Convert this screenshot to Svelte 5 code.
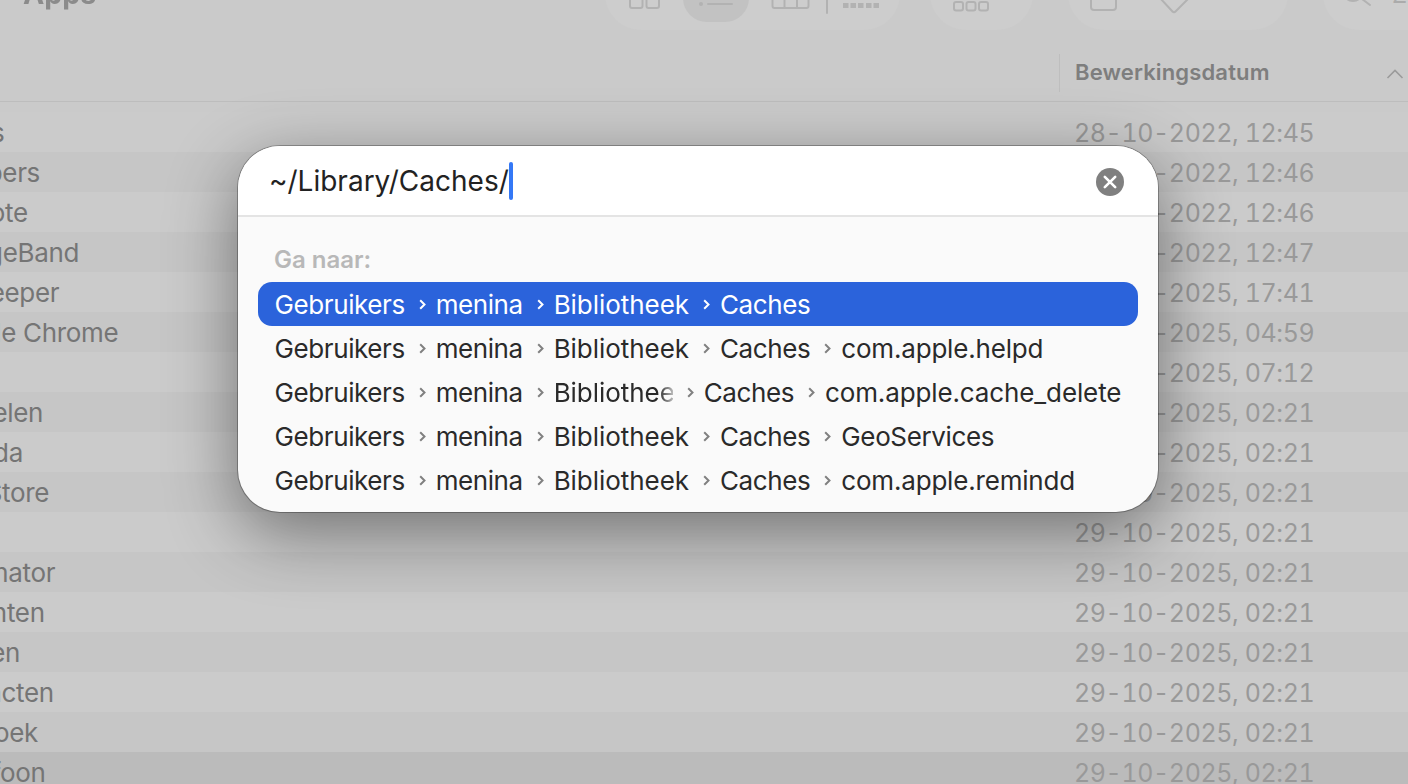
<script>
  const files = [
    ["Pages", "28-10-2022, 12:45"],
    ["Numbers", "28-10-2022, 12:46"],
    ["Keynote", "28-10-2022, 12:46"],
    ["GarageBand", "28-10-2022, 12:47"],
    ["Beekeeper", "20-10-2025, 17:41"],
    ["Google Chrome", "22-10-2025, 04:59"],
    ["Mail", "24-10-2025, 07:12"],
    ["Aandelen", "29-10-2025, 02:21"],
    ["Agenda", "29-10-2025, 02:21"],
    ["App Store", "29-10-2025, 02:21"],
    ["Atlas", "29-10-2025, 02:21"],
    ["Automator", "29-10-2025, 02:21"],
    ["Berichten", "29-10-2025, 02:21"],
    ["Boeken", "29-10-2025, 02:21"],
    ["Contacten", "29-10-2025, 02:21"],
    ["Dagboek", "29-10-2025, 02:21"],
    ["Dictafoon", "29-10-2025, 02:21"]
  ];

  const base = ["Gebruikers", "menina", "Bibliotheek", "Caches"];
  const results = [
    { path: base, selected: true },
    { path: [...base, "com.apple.helpd"] },
    { path: [...base, "com.apple.cache_delete"], faded: 2 },
    { path: [...base, "GeoServices"] },
    { path: [...base, "com.apple.remindd"] }
  ];

  // tracking per word, Inter runs a bit wider than the original font
  const tracking = {
    Gebruikers: -0.4,
    menina: -0.45,
    Bibliotheek: -0.05,
    Caches: -0.4,
    GeoServices: -0.36,
    "com.apple.cache_delete": -0.12
  };
  const track = (word) => (tracking[word] ?? -0.19) + "px";
</script>

<div class="finder">
  <div class="toolbar">
    <div class="title">Apps</div>

    <div class="pill views">
      <svg viewBox="605 0 295 30">
        <rect class="sel" x="683" y="-30" width="66" height="52" rx="24" />
        <rect class="ic" x="630" y="-8" width="12.5" height="16" rx="2" />
        <rect class="ic" x="646.5" y="-8" width="12.5" height="16" rx="2" />
        <circle class="dot" cx="701" cy="4" r="2" />
        <path class="ic" d="M708 4h24" />
        <path class="ic" d="M772.5 -8v14a2 2 0 0 0 2 2h32a2 2 0 0 0 2-2v-14M784.5 -8v16M797 -8v16" />
        <path class="ic" d="M827 0v13" stroke-width="1" />
        <rect class="dot" x="843" y="3" width="5.5" height="5" />
        <rect class="dot" x="850.5" y="3" width="5.5" height="5" />
        <rect class="dot" x="858" y="3" width="5.5" height="5" />
        <rect class="dot" x="866" y="3" width="5.5" height="5" />
        <rect class="dot" x="873.5" y="3" width="5.5" height="5" />
      </svg>
    </div>

    <div class="pill group">
      <svg viewBox="930 0 103 30">
        <rect class="ic" x="954" y="2" width="9" height="8.5" rx="2" />
        <rect class="ic" x="966.5" y="2" width="9" height="8.5" rx="2" />
        <rect class="ic" x="979" y="2" width="9" height="8.5" rx="2" />
      </svg>
    </div>

    <div class="pill actions">
      <svg viewBox="1068 0 220 30">
        <path class="ic" d="M1091 -6v13a3 3 0 0 0 3 3h19a3 3 0 0 0 3-3v-13" />
        <path class="ic" d="M1160 -2l12.5 13.5a2 2 0 0 0 3 0l13.5-13.5" />
      </svg>
    </div>

    <div class="pill search">
      <svg class="glass" viewBox="0 0 24 12">
        <circle class="ic" cx="4" cy="-9" r="10" />
        <path class="ic" d="M13 -1l8 6" stroke-width="3" />
      </svg>
      <span class="query">Zoek</span>
    </div>
  </div>

  <div class="head">
    <div class="col">Bewerkingsdatum</div>
    <svg class="sort" viewBox="0 0 18 10">
      <path d="M1.5 9l7.5-7.5 7.5 7.5" />
    </svg>
  </div>

  <div class="rows">
    {#each files as f, i}
      <div class="row" class:odd={i % 2 === 1} class:current={i === files.length - 1}>
        <span class="name">{f[0]}</span>
        <span class="date">{f[1]}</span>
      </div>
    {/each}
  </div>

  <!-- Ga naar map -->
  <div class="dialog">
    <div class="field">
      <span class="typed">~/Library/Caches/</span>
      <span class="caret"></span>
      <svg class="clear" viewBox="0 0 28 28">
        <circle cx="14" cy="14" r="14" fill="#808080" />
        <path d="M8.8 8.8l10.4 10.4M19.2 8.8l-10.4 10.4" stroke="#fff" stroke-width="2.6" stroke-linecap="round" />
      </svg>
    </div>

    <div class="body">
      <div class="label">Ga naar:</div>
      {#each results as r}
        <div class="result" class:selected={r.selected}>
          {#each r.path as part, j}
            {#if j > 0}
              <svg class="chev" viewBox="0 0 7 11">
                <path d="M1.2 1.2l4.3 4.3-4.3 4.3" />
              </svg>
            {/if}
            <span class="part" class:cut={r.faded === j} style:letter-spacing={track(part)}>{part}</span>
          {/each}
        </div>
      {/each}
    </div>
  </div>
</div>

<style>
  :global(body) {
    margin: 0;
    overflow: hidden;
    background: #cacaca;
  }

  .finder {
    position: relative;
    width: 1408px;
    height: 784px;
    overflow: hidden;
    background: #cacaca;
    font-family: Inter, "Liberation Sans", sans-serif;
  }

  /* toolbar is scrolled off the top, only the bottom of it shows */
  .toolbar {
    display: flex;
    align-items: flex-end;
    height: 30px;
    margin-bottom: 24px;
  }

  .title {
    width: 605px;
    padding-left: 23px;
    height: 40px;
    line-height: 40px;
    margin-bottom: 16px;
    font-size: 28.5px;
    font-weight: 700;
    color: #8b8b8b;
    flex-shrink: 0;
    box-sizing: border-box;
    filter: blur(0.4px);
  }

  .pill {
    flex-shrink: 0;
    height: 60px;
    background: #cdcdcd;
    border-radius: 0 0 36px 36px;
    overflow: hidden;
  }

  .pill svg {
    display: block;
    position: relative;
    top: 30px;
    height: 30px;
    width: 100%;
  }

  .views {
    width: 295px;
    margin-right: 30px;
  }

  .group {
    width: 103px;
    margin-right: 35px;
  }

  .actions {
    width: 220px;
    margin-right: 35px;
  }

  .search {
    width: 85px;
    display: flex;
    align-items: flex-end;
    border-radius: 0 0 0 36px;
  }

  .pill svg.glass {
    position: static;
    flex-shrink: 0;
    width: 24px;
    height: 12px;
    margin-left: 26px;
    margin-bottom: 18px;
    overflow: visible;
  }

  .query {
    margin-left: 19px;
    margin-bottom: 22px;
    font-size: 24px;
    line-height: 26px;
    color: #ababab;
    white-space: nowrap;
  }

  .sel {
    fill: #c2c2c2;
  }

  .ic {
    fill: none;
    stroke: #b2b2b2;
    stroke-width: 2;
    stroke-linecap: round;
  }

  .dot {
    fill: #b2b2b2;
  }

  .head {
    display: flex;
    align-items: center;
    height: 47px;
    border-bottom: 1px solid #bdbdbd;
    padding-left: 1059px;
  }

  .col {
    height: 38px;
    line-height: 37px;
    margin-top: -9px;
    width: 300px;
    padding-left: 15px;
    border-left: 1px solid #bebebe;
    font-size: 22px;
    font-weight: 600;
    letter-spacing: 0.15px;
    color: #7e7e7e;
    flex-shrink: 0;
  }

  .sort {
    width: 18px;
    height: 10px;
    margin-left: 11px;
    margin-top: -8px;
    fill: none;
    stroke: #9b9b9b;
    stroke-width: 1.6;
    flex-shrink: 0;
  }

  .rows {
    padding-top: 10px;
  }

  .row {
    display: flex;
    align-items: center;
    height: 40px;
    background: #cbcbcb;
    font-size: 26px;
    white-space: nowrap;
  }

  .row.odd {
    background: #c6c6c6;
  }

  .row.current {
    background: #bbbbbb;
  }

  .name {
    width: 1144px;
    margin-left: -70px;
    letter-spacing: -0.33px;
    color: #757575;
    flex-shrink: 0;
  }

  .date {
    margin-top: 2px;
    font-size: 25px;
    font-variant-numeric: tabular-nums;
    letter-spacing: -0.4px;
    color: #999999;
  }

  .dialog {
    position: absolute;
    left: 238px;
    top: 146px;
    width: 920px;
    height: 366px;
    border-radius: 42px;
    overflow: hidden;
    background: #fafafa;
    box-shadow: 0 0 0 1px rgba(0, 0, 0, 0.28), 0 20px 70px rgba(0, 0, 0, 0.45);
  }

  .field {
    display: flex;
    align-items: center;
    height: 69px;
    padding-left: 31px;
    padding-right: 34px;
    background: #ffffff;
    border-bottom: 2px solid #e4e4e4;
    font-size: 28px;
    color: #222222;
  }

  .caret {
    width: 4px;
    height: 38px;
    border-radius: 2px;
    background: #3478f6;
  }

  .clear {
    width: 28px;
    height: 28px;
    margin-left: auto;
    margin-top: 3px;
  }

  .body {
    padding: 30px 20px 0;
  }

  .label {
    height: 26px;
    line-height: 26px;
    margin-bottom: 9px;
    padding-left: 16px;
    font-size: 24px;
    font-weight: 600;
    color: #b8b8b8;
  }

  .result {
    display: flex;
    align-items: center;
    height: 44px;
    padding-left: 16.5px;
    border-radius: 14px;
    font-size: 26px;
    color: #2a2a2a;
    white-space: nowrap;
  }

  .result.selected {
    background: #2b63db;
    color: #ffffff;
  }

  .chev {
    width: 7px;
    height: 11px;
    margin: 0 10px 0 14px;
    fill: none;
    stroke: #808080;
    stroke-width: 2;
    flex-shrink: 0;
  }

  .selected .chev {
    stroke: #ffffff;
  }

  .cut {
    width: 119px;
    overflow: hidden;
    -webkit-mask-image: linear-gradient(to right, #000 88%, rgba(0, 0, 0, 0.3) 100%);
    mask-image: linear-gradient(to right, #000 88%, rgba(0, 0, 0, 0.3) 100%);
  }
</style>
